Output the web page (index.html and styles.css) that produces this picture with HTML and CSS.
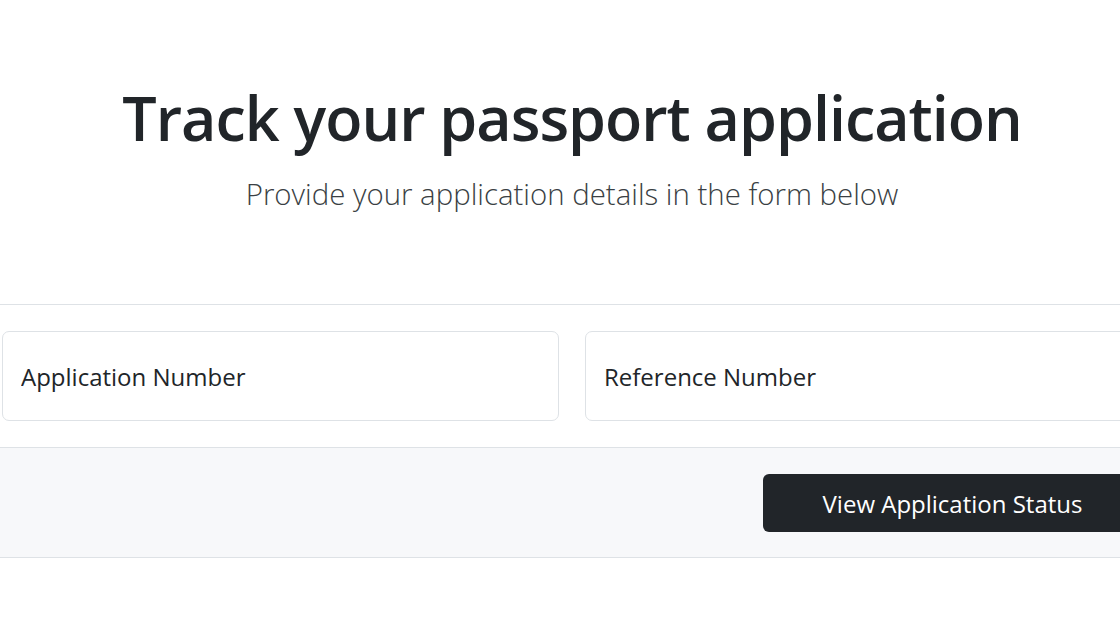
FILE: index.html
```html
<!DOCTYPE html>
<html lang="en">
<head>
<meta charset="utf-8">
<title>Track your passport application</title>
<link rel="stylesheet" href="styles.css">
</head>
<body>
<div class="page">
  <header class="hero">
    <h1 class="title">Track your passport application</h1>
    <p class="lead">Provide your application details in the form below</p>
  </header>
  <form class="card">
    <div class="card-body">
      <input class="field" type="text" placeholder="Application Number">
      <input class="field" type="text" placeholder="Reference Number">
    </div>
    <div class="card-footer">
      <button class="btn" type="button">View Application Status</button>
    </div>
  </form>
</div>
</body>
</html>
```
FILE: styles.css
```css
html, body {
  margin: 0;
  padding: 0;
  background: #ffffff;
  overflow: hidden;
}
body {
  font-family: "Open Sans", "Noto Sans", sans-serif;
  color: #212529;
}
.page {
  width: 1190px;
  margin-left: -23px;
}
.hero {
  text-align: center;
  padding-top: 81px;
  padding-bottom: 91px;
}
.title {
  margin: 0;
  font-size: 61px;
  font-weight: 600;
  line-height: 1.2;
  letter-spacing: -1px;
}
.lead {
  margin: 21px 0 0;
  font-size: 29.4px;
  font-weight: 300;
  line-height: 1.3;
  color: #3a3f44;
}
.card {
  display: block;
  border: 1px solid #dee2e6;
  border-radius: 9px;
  margin: 0;
}
.card-body {
  display: flex;
  gap: 26px;
  padding: 26px 24px;
}
.field {
  flex: 1 1 0;
  min-width: 0;
  height: 90px;
  box-sizing: border-box;
  border: 1px solid #dee2e6;
  border-radius: 7px;
  padding: 0 18px;
  font-family: inherit;
  font-size: 24px;
  color: #212529;
  background: #fff;
}
.field::placeholder {
  color: #212529;
  opacity: 1;
}
.card-footer {
  display: flex;
  justify-content: flex-end;
  padding: 26px 24px 25px;
  background: #f7f8fa;
  border-top: 1px solid #dee2e6;
  border-radius: 0 0 9px 9px;
}
.btn {
  width: 379px;
  height: 58px;
  border: 0;
  border-radius: 6px;
  background: #212529;
  color: #ffffff;
  font-family: inherit;
  font-size: 24px;
  font-weight: 400;
}
```
